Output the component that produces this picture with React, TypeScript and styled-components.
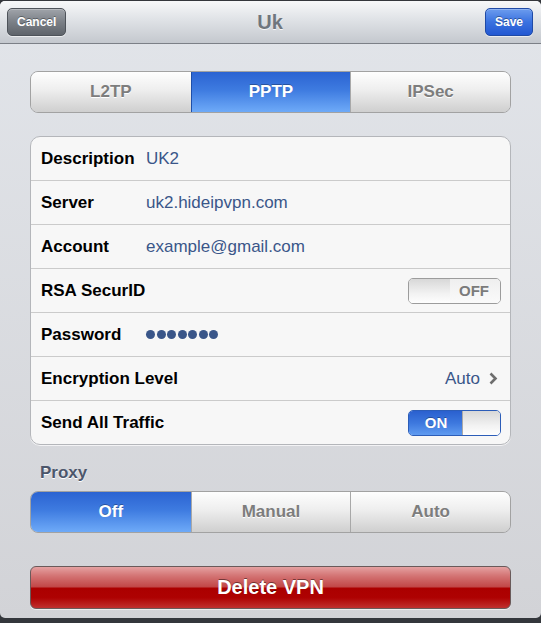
import React from "react";
import styled, { createGlobalStyle, css } from "styled-components";

const GlobalStyle = createGlobalStyle`
  html, body {
    margin: 0;
    padding: 0;
    background: #34373c;
  }
  body {
    font-family: "Liberation Sans", Arial, Helvetica, sans-serif;
  }
`;

const Screen = styled.div`
  width: 541px;
  height: 617px;
  margin-top: 1px;
  border-radius: 5px;
  overflow: hidden;
  background: linear-gradient(#e2e5ea, #d2d3d7);
`;

const NavBar = styled.div`
  height: 42px;
  border-bottom: 1px solid #7c8087;
  background: linear-gradient(#f7f8f9, #dfe2e6 45%, #c4c8ce);
  display: grid;
  grid-template-columns: 1fr auto 1fr;
  align-items: center;
  padding: 0 8px 0 7px;
`;

const NavTitle = styled.div`
  font-size: 20px;
  font-weight: bold;
  color: #6f767e;
  text-shadow: 0 1px 0 rgba(255, 255, 255, 0.8);
`;

const BarButton = styled.button<{ $primary?: boolean }>`
  height: 28px;
  padding: 0 9px;
  border-radius: 5px;
  font-family: inherit;
  font-size: 12px;
  font-weight: bold;
  color: #fff;
  text-shadow: 0 -1px 0 rgba(0, 0, 0, 0.35);
  box-shadow: 0 1px 0 rgba(255, 255, 255, 0.6), inset 0 1px 0 rgba(255, 255, 255, 0.25);
  ${(p) =>
    p.$primary
      ? css`
          justify-self: end;
          border: 1px solid #1f4aa6;
          background: linear-gradient(#6c9cee, #3a72e0 50%, #2358d2);
        `
      : css`
          justify-self: start;
          border: 1px solid #4e535a;
          background: linear-gradient(#a0a4aa, #7b8087 50%, #5f646b);
        `}
`;

const Content = styled.div`
  padding: 27px 30px 0;
  display: flex;
  flex-direction: column;
`;

const Segmented = styled.div`
  height: 42px;
  display: grid;
  grid-template-columns: repeat(3, 1fr);
  border: 1px solid #a2a2a2;
  border-radius: 8px;
  overflow: hidden;
  box-sizing: border-box;
`;

const Segment = styled.div<{ $active?: boolean }>`
  display: flex;
  align-items: center;
  justify-content: center;
  font-size: 17px;
  font-weight: bold;
  & + & {
    border-left: 1px solid #a8a8a8;
  }
  ${(p) =>
    p.$active
      ? css`
          color: #fff;
          text-shadow: 0 -1px 0 rgba(0, 0, 0, 0.3);
          background: linear-gradient(#2b63d2, #3e7be0 45%, #6eaaf8);
          border-color: #1f4fa8 !important;
          & + * {
            border-left-color: #1f4fa8;
          }
        `
      : css`
          color: #7d7d7d;
          text-shadow: 0 1px 0 #fff;
          background: linear-gradient(#fefefe, #eeeeee 45%, #cfcfcf);
        `}
`;

const Group = styled.div`
  margin-top: 23px;
  border: 1px solid #b4b6ba;
  border-radius: 10px;
  background: #f7f7f7;
  overflow: hidden;
  box-shadow: 0 1px 0 rgba(255, 255, 255, 0.7);
`;

const Row = styled.div`
  height: 43px;
  display: grid;
  grid-template-columns: 105px 1fr auto;
  align-items: center;
  padding: 0 9px 0 10px;
  & + & {
    border-top: 1px solid #cbcbcb;
  }
`;

const Label = styled.div`
  font-size: 17px;
  font-weight: bold;
  color: #000;
  white-space: nowrap;
`;

const Value = styled.div<{ $right?: boolean }>`
  font-size: 17px;
  color: #3a5689;
  white-space: nowrap;
  ${(p) =>
    p.$right &&
    css`
      grid-column: 3;
      display: flex;
      align-items: center;
      gap: 9px;
      padding-right: 3px;
    `}
`;

const Dots = styled.div`
  display: flex;
  gap: 1.5px;
`;

const Dot = styled.span`
  width: 9px;
  height: 9px;
  border-radius: 50%;
  background: #3a5689;
`;

const Toggle = styled.div<{ $on?: boolean }>`
  grid-column: 3;
  width: 93px;
  height: 26px;
  box-sizing: border-box;
  border: 1px solid #9c9c9c;
  border-radius: 5px;
  overflow: hidden;
  display: grid;
  grid-template-columns: ${(p) => (p.$on ? "54px 1fr" : "41px 1fr")};
  ${(p) =>
    p.$on &&
    css`
      border-color: #2c5db8;
    `}
`;

const Knob = styled.div`
  background: linear-gradient(#d6d6d6, #f2f2f2 60%, #ffffff);
  border-right: 1px solid #a9a9a9;
  border-left: 1px solid #a9a9a9;
  margin: -1px;
`;

const ToggleText = styled.div<{ $on?: boolean }>`
  display: flex;
  align-items: center;
  justify-content: center;
  font-size: 15px;
  font-weight: bold;
  ${(p) =>
    p.$on
      ? css`
          color: #fff;
          background: linear-gradient(#2a60cf, #3d78de 50%, #5f9bf0);
          text-shadow: 0 -1px 0 rgba(0, 0, 0, 0.3);
        `
      : css`
          color: #7b7b7b;
          background: linear-gradient(#efefef, #fafafa);
          padding-right: 2px;
        `}
`;

const Chevron = styled.svg`
  width: 9px;
  height: 13px;
`;

const SectionHeader = styled.div`
  margin: 18px 0 8px;
  padding-left: 10px;
  line-height: 20px;
  font-size: 17px;
  font-weight: bold;
  color: #4c566b;
  text-shadow: 0 1px 0 #fff;
`;

const DeleteButton = styled.button`
  margin-top: 33px;
  height: 43px;
  width: 100%;
  border: 1px solid #6a5a5a;
  border-radius: 6px;
  font-family: inherit;
  font-size: 20px;
  font-weight: bold;
  color: #fff;
  text-shadow: 0 -1px 0 rgba(0, 0, 0, 0.45);
  background: linear-gradient(
    #e5a1a1 0%,
    #d37373 22%,
    #c24848 48%,
    #ab0000 52%,
    #ae0202 75%,
    #c0302f 100%
  );
  box-shadow: 0 1px 0 rgba(255, 255, 255, 0.6);
`;

function App() {
  return (
    <>
      <GlobalStyle />
      <Screen>
        <NavBar>
          <BarButton>Cancel</BarButton>
          <NavTitle>Uk</NavTitle>
          <BarButton $primary>Save</BarButton>
        </NavBar>

        <Content>
          <Segmented>
            <Segment>L2TP</Segment>
            <Segment $active>PPTP</Segment>
            <Segment>IPSec</Segment>
          </Segmented>

          <Group>
            <Row>
              <Label>Description</Label>
              <Value>UK2</Value>
            </Row>
            <Row>
              <Label>Server</Label>
              <Value>uk2.hideipvpn.com</Value>
            </Row>
            <Row>
              <Label>Account</Label>
              <Value>example@gmail.com</Value>
            </Row>
            <Row>
              <Label>RSA SecurID</Label>
              <Toggle>
                <Knob />
                <ToggleText>OFF</ToggleText>
              </Toggle>
            </Row>
            <Row>
              <Label>Password</Label>
              <Dots>
                {Array.from({ length: 7 }).map((_, i) => (
                  <Dot key={i} />
                ))}
              </Dots>
            </Row>
            <Row>
              <Label>Encryption Level</Label>
              <Value $right>
                Auto
                <Chevron viewBox="0 0 9 13">
                  <path
                    d="M1.5 1.5 L6.5 6.5 L1.5 11.5"
                    fill="none"
                    stroke="#6e6e6e"
                    strokeWidth="2.6"
                  />
                </Chevron>
              </Value>
            </Row>
            <Row>
              <Label>Send All Traffic</Label>
              <Toggle $on>
                <ToggleText $on>ON</ToggleText>
                <Knob />
              </Toggle>
            </Row>
          </Group>

          <SectionHeader>Proxy</SectionHeader>
          <Segmented>
            <Segment $active>Off</Segment>
            <Segment>Manual</Segment>
            <Segment>Auto</Segment>
          </Segmented>

          <DeleteButton>Delete VPN</DeleteButton>
        </Content>
      </Screen>
    </>
  );
}

export default App;
